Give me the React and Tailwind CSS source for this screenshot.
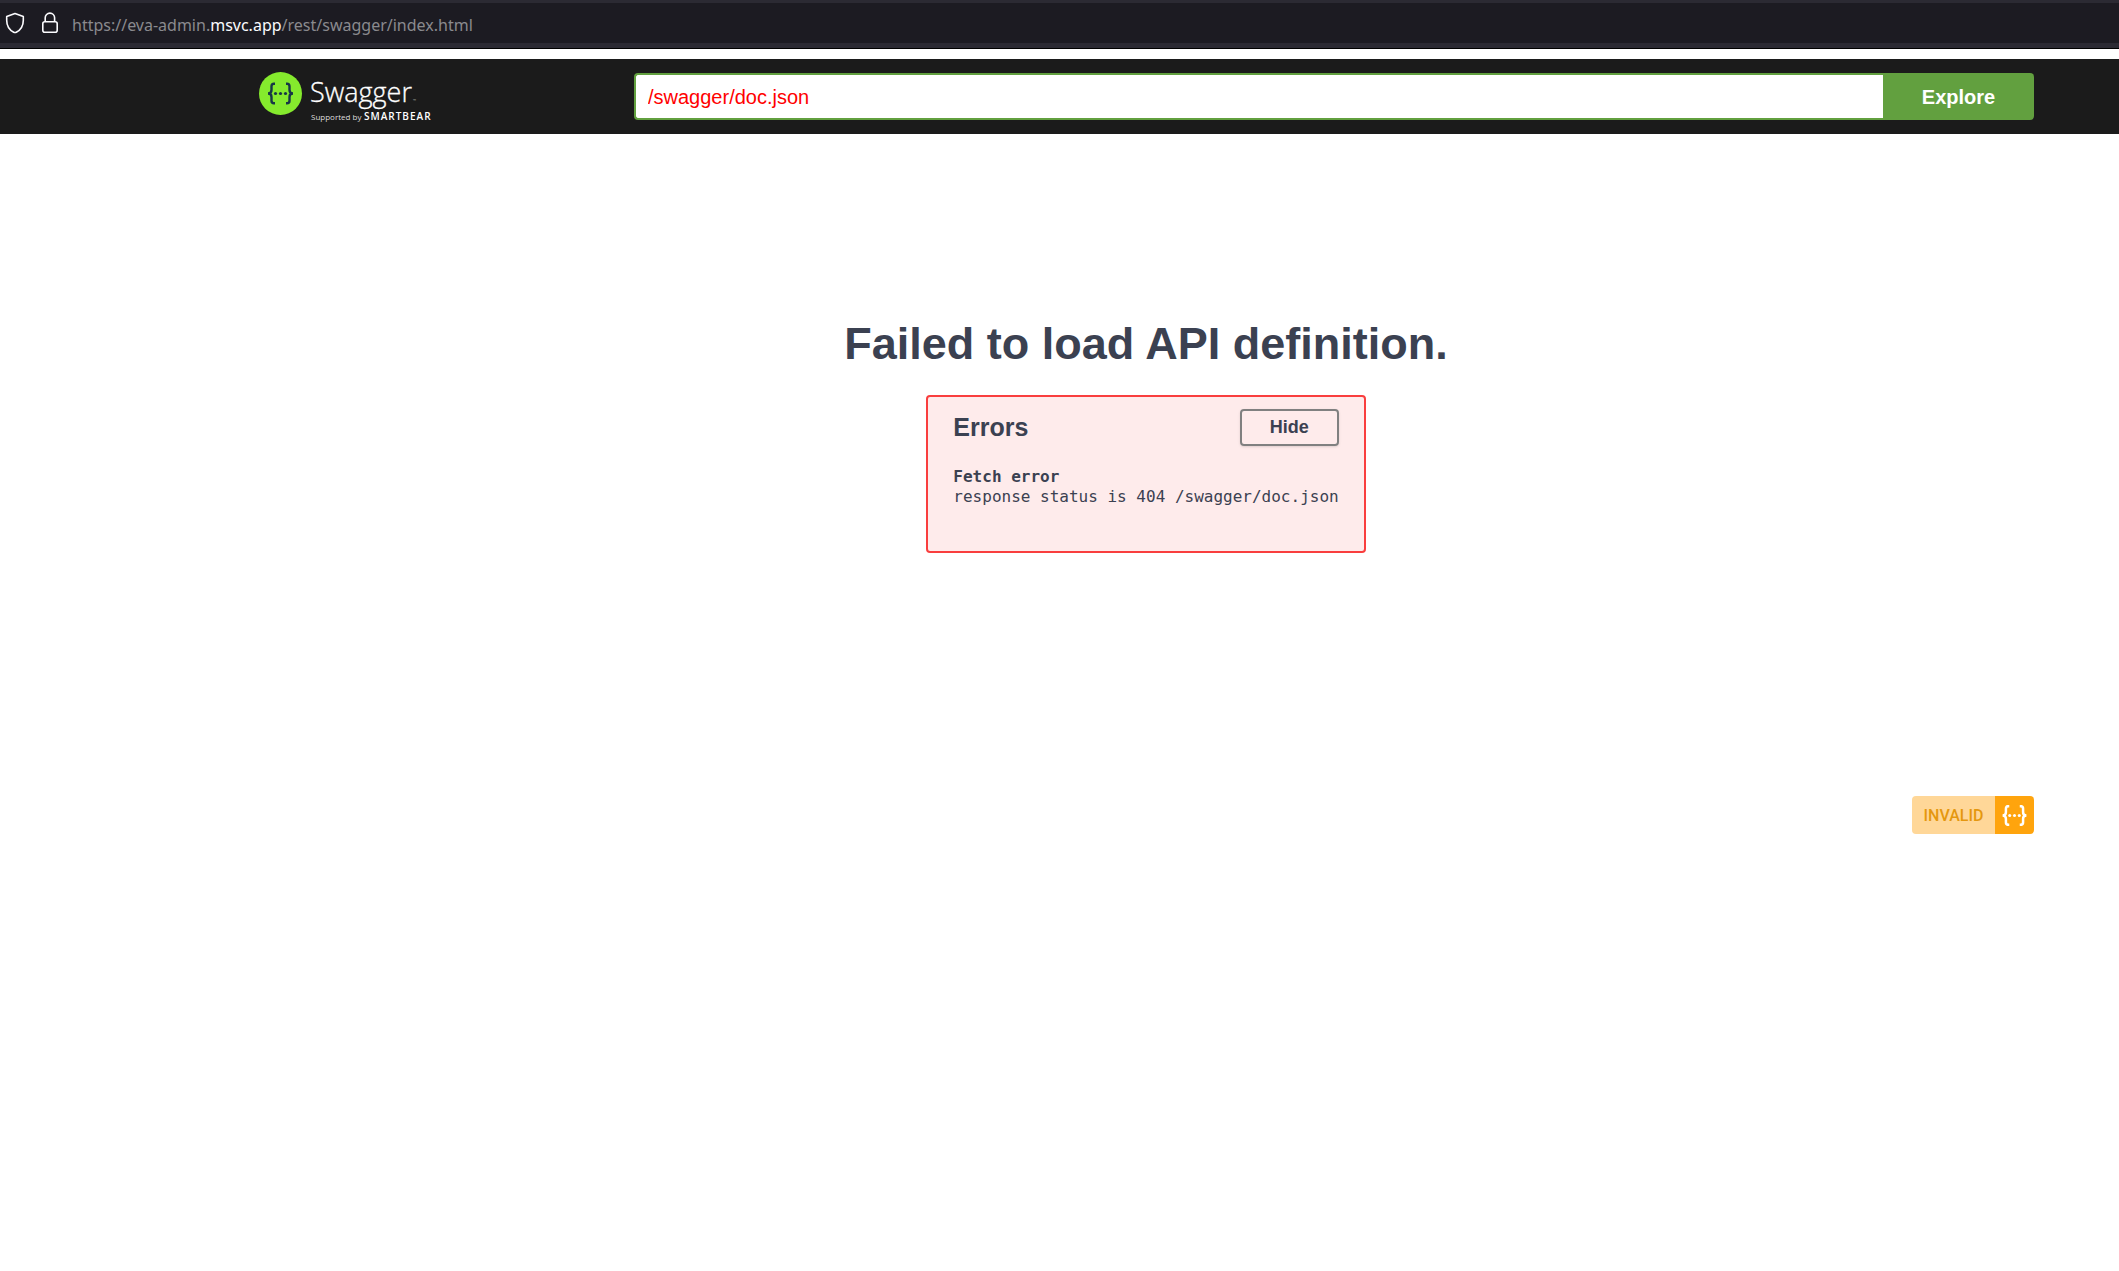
import React, { useState } from "react";

function Braces({ className }) {
  return (
    <svg viewBox="0 0 26 22" className={className} fill="none" stroke="currentColor" strokeWidth="2.6" aria-hidden="true">
      <path d="M7.5 1.2h-1C4.700 1.200 4 2.200 4 3.800V7.600C4 9.800 3 11 .5 11 3 11 4 12.200 4 14.400v3.800c0 1.600.7 2.600 2.500 2.600h1" />
      <path d="M18.500 1.200h1c1.800 0 2.500 1 2.500 2.600v3.800c0 2.200 1 3.400 3.500 3.400-2.500 0-3.500 1.200-3.500 3.400v3.800c0 1.600-.7 2.600-2.500 2.600h-1" />
      <g fill="currentColor" stroke="none">
        <circle cx="8" cy="11" r="1.600" />
        <circle cx="13" cy="11" r="1.600" />
        <circle cx="18" cy="11" r="1.600" />
      </g>
    </svg>
  );
}

function AddressBar() {
  return (
    <div className="flex h-[49px] items-center border-b border-black bg-[#2b2a33] pt-[3px] pb-[5px]">
      <div className="flex h-10 w-full items-center bg-[#1c1b22] pl-[5px] font-['Noto_Sans',sans-serif] text-[16px] leading-6 text-[#8a8a8e]">
        <svg width="20" height="22" viewBox="0 0 20 22" fill="none" stroke="#fbfbfe" strokeWidth="1.600" strokeLinejoin="round" aria-hidden="true">
          <path d="M10 1.500 18.300 4.600v3.600c0 5.600-2.800 9.800-7 12a2.800 2.800 0 0 1-2.600 0c-4.200-2.200-7-6.400-7-12V4.600z" />
        </svg>
        <svg className="ml-4" width="18" height="22" viewBox="0 0 18 22" fill="none" stroke="#fbfbfe" strokeWidth="1.600" aria-hidden="true">
          <rect x="1.800" y="9.800" width="14.400" height="10.400" rx="2" />
          <path d="M4.200 9.800V5.800a4.700 4.700 0 0 1 9.400 0v4" />
        </svg>
        <span className="ml-[13px] pt-1">
          https://eva-admin.<span className="text-[#fbfbfe]">msvc.app</span>/rest/swagger/index.html
        </span>
      </div>
    </div>
  );
}

function Logo() {
  return (
    <a href="#" aria-label="Swagger" className="block w-[375px] shrink-0">
      <svg width="178" height="56" viewBox="0 0 178 56" aria-hidden="true">
        <circle cx="21.500" cy="24.500" r="21.500" fill="#85ea2d" />
        <g transform="translate(8.500 13.500)" fill="none" stroke="#173647" strokeWidth="2.400">
          <path d="M7.500 1.200h-1c-1.800 0-2.500 1-2.500 2.600V7.600C4 9.800 3 11 .5 11 3 11 4 12.200 4 14.400v3.800c0 1.600.7 2.600 2.500 2.600h1" />
          <path d="M18.500 1.200h1c1.800 0 2.500 1 2.500 2.600v3.800c0 2.200 1 3.400 3.500 3.400-2.500 0-3.500 1.200-3.500 3.400v3.800c0 1.600-.7 2.600-2.500 2.600h-1" />
          <g fill="#173647" stroke="none">
            <circle cx="8" cy="11" r="1.600" />
            <circle cx="13" cy="11" r="1.600" />
            <circle cx="18" cy="11" r="1.600" />
          </g>
        </g>
        <text x="51" y="33" fill="#fff" stroke="#fff" strokeWidth="0.3" className="font-['Open_Sans'] text-[27px] font-light">Swagger</text>
        <text x="154" y="33" fill="#aaa" className="font-['Open_Sans'] text-[4px]">™</text>
        <text x="52" y="51" fill="#ddd" className="font-['Open_Sans'] text-[8px]">Supported by</text>
        <text x="105" y="51" fill="#fff" className="font-['Open_Sans'] text-[10px] font-semibold tracking-widest">SMARTBEAR</text>
      </svg>
    </a>
  );
}

export default function App() {
  const [url, setUrl] = useState("/swagger/doc.json");
  const [open, setOpen] = useState(true);
  return (
    <div className="min-h-screen bg-white font-['Liberation_Sans',sans-serif] text-[#3b4151]">
      <AddressBar />
      <header className="mt-2.5 flex h-[75px] items-center bg-[#1b1b1b] pr-[85px] pl-[259px]">
        <Logo />
        <form className="flex h-[47px] grow" onSubmit={(e) => e.preventDefault()}>
          <input
            aria-label="API definition URL"
            value={url}
            onChange={(e) => setUrl(e.target.value)}
            className="min-w-0 grow rounded-l border-2 border-r-0 border-[#62a03f] bg-white px-3 text-[20px] text-[#ff0000] outline-none"
          />
          <button className="w-[151px] rounded-r bg-[#62a03f] text-[20px] font-bold text-white">Explore</button>
        </form>
      </header>
      <main className="flex flex-col pr-[85px] pl-[258px]">
        <h1 className="mt-[184px] text-center text-[45px] leading-[52px] font-bold">Failed to load API definition.</h1>
        <section className="mt-[25px] min-h-[158px] self-center rounded border-2 border-[#f93e3e] bg-[#feebeb] px-[25px] pt-3">
          <div className="flex items-start justify-between">
            <h2 className="text-[25px] leading-9 font-bold">Errors</h2>
            <button
              onClick={() => setOpen(!open)}
              className="h-[37px] w-[99px] rounded border-2 border-[#808080] text-[18px] font-bold shadow-sm"
            >
              Hide
            </button>
          </div>
          {open && (
            <div className="mt-[21px] font-['DejaVu_Sans_Mono',monospace] text-[16px] leading-5">
              <h3 className="font-bold">Fetch error</h3>
              <p>response status is 404 /swagger/doc.json</p>
            </div>
          )}
        </section>
        <a
          href="#"
          aria-label="Validator status: invalid"
          className="mt-[243px] flex h-[38px] self-end overflow-hidden rounded font-['Roboto',sans-serif] text-[16px] font-medium"
        >
          <span className="flex w-[83px] items-center justify-center bg-[#ffd798] pt-0.5 text-[#e5970f]">INVALID</span>
          <span className="flex w-[39px] items-center justify-center bg-[#ffa40d] text-white">
            <Braces className="h-[21px] w-[25px]" />
          </span>
        </a>
      </main>
    </div>
  );
}
